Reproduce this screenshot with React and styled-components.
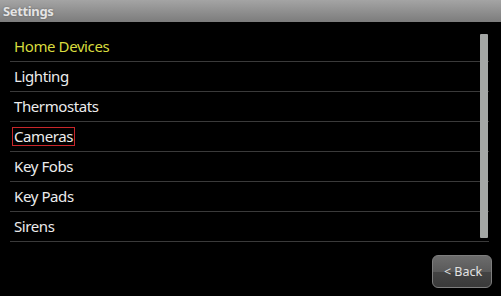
import styled, { createGlobalStyle } from "styled-components";

const GlobalStyle = createGlobalStyle`
  html, body {
    margin: 0;
    padding: 0;
    background: #000;
  }
  body {
    font-family: "Noto Sans", "Open Sans", sans-serif;
  }
`;

const items = [
  { label: "Home Devices", header: true },
  { label: "Lighting" },
  { label: "Thermostats" },
  { label: "Cameras", focused: true },
  { label: "Key Fobs" },
  { label: "Key Pads" },
  { label: "Sirens" },
];

const App = () => {
  return (
    <Screen>
      <GlobalStyle />
      <TitleBar>Settings</TitleBar>
      <ListArea>
        <List>
          {items.map((item) => (
            <Row key={item.label} $header={item.header}>
              <Label $focused={item.focused}>{item.label}</Label>
            </Row>
          ))}
        </List>
        <Scrollbar />
      </ListArea>
      <Footer>
        <BackButton>&lt; Back</BackButton>
      </Footer>
    </Screen>
  );
};

export default App;

const Screen = styled.div`
  width: 501px;
  height: 296px;
  background: #000;
  display: flex;
  flex-direction: column;
  overflow: hidden;
`;

const TitleBar = styled.div`
  height: 22px;
  line-height: 22px;
  padding-left: 3px;
  font-size: 13px;
  font-weight: 700;
  letter-spacing: -0.35px;
  color: #e4e4e4;
  text-shadow: 0 0 2px rgba(0, 0, 0, 0.35);
  background: linear-gradient(to bottom, #a4a4a4 0%, #8c8c8c 60%, #7c7c7c 100%);
`;

const ListArea = styled.div`
  position: relative;
  padding: 10px 12px 0 10px;
`;

const List = styled.div`
  display: flex;
  flex-direction: column;
`;

const Row = styled.div`
  height: 29px;
  border-bottom: 1px solid #3a3a3a;
  display: flex;
  align-items: center;
  padding-left: 2px;
  font-size: 15px;
  letter-spacing: -0.4px;
  color: ${(p) => (p.$header ? "#d8dc3e" : "#ececec")};
`;

const Label = styled.span`
  padding: 0 1px;
  line-height: 17px;
  border: 1px solid ${(p) => (p.$focused ? "#c8262a" : "transparent")};
`;

const Scrollbar = styled.div`
  position: absolute;
  left: 480px;
  top: 12px;
  width: 8px;
  height: 204px;
  background: #a3a6a4;
  border-radius: 1px;
`;

const Footer = styled.div`
  display: flex;
  justify-content: flex-end;
  padding: 13px 9px 0 0;
`;

const BackButton = styled.button`
  width: 60px;
  height: 33px;
  border-radius: 6px;
  border: 1px solid #7e7e7e;
  background: linear-gradient(to bottom, #6c6c6c 0%, #5a5a5a 50%, #444 52%, #3a3a3a 100%);
  color: #e2e2e2;
  font-family: "Noto Sans", "Open Sans", sans-serif;
  font-size: 12.5px;
  padding: 0 0 0 2px;
`;
